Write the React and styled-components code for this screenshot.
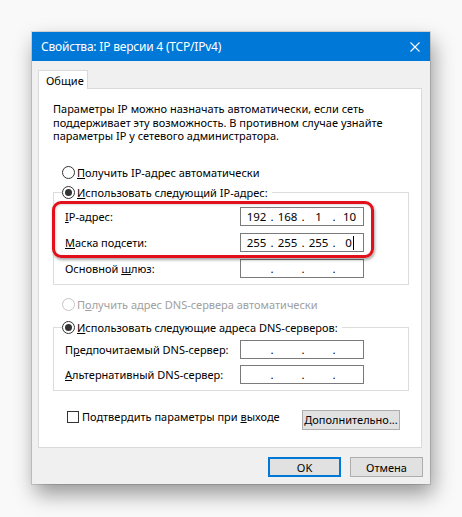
import styled, { createGlobalStyle } from "styled-components"

const Global = createGlobalStyle`
  *, *::before, *::after {
    box-sizing: border-box;
  }
  body {
    margin: 0;
    background: #f9f9f9;
    font-family: "Noto Sans", "Open Sans", sans-serif;
    font-size: 11px;
    color: #000;
  }
`

const ip = ["192", "168", "1", "10"]
const mask = ["255", "255", "255", "0"]

const App = () => (
  <Page>
    <Global />
    <Window>
      <TitleBar>
        <Title>Свойства: IP версии 4 (TCP/IPv4)</Title>
        <Close viewBox="0 0 10 10">
          <path d="M0.5 0.5L9.5 9.5M9.5 0.5L0.5 9.5" />
        </Close>
      </TitleBar>
      <Body>
        <Tabs>
          <Tab>Общие</Tab>
        </Tabs>
        <Panel>
          <Intro>
            Параметры IP можно назначать автоматически, если сеть
            <br />
            поддерживает эту возможность. В противном случае узнайте
            <br />
            параметры IP у сетевого администратора.
          </Intro>
          <Radio top={22}>
            <Dot />
            <span><u>П</u>олучить IP-адрес автоматически</span>
          </Radio>
          <Group top={4} pad={6} gap={7}>
            <Legend>
              <Radio as="span">
                <Dot checked />
                <span><u>И</u>спользовать следующий IP-адрес:</span>
              </Radio>
            </Legend>
            <Highlight>
              <Field label={<><u>I</u>P-адрес:</>} value={ip} />
              <Field label={<><u>М</u>аска подсети:</>} value={mask} caret />
            </Highlight>
            <Field label={<>Основной <u>ш</u>люз:</>} />
          </Group>
          <Radio top={12} disabled>
            <Dot disabled />
            <span>П<u>о</u>лучить адрес DNS-сервера автоматически</span>
          </Radio>
          <Group top={7} pad={4} gap={6}>
            <Legend>
              <Radio as="span">
                <Dot checked />
                <span><u>И</u>спользовать следующие адреса DNS-серверов:</span>
              </Radio>
            </Legend>
            <Field label={<>П<u>р</u>едпочитаемый DNS-сервер:</>} />
            <Field label={<><u>А</u>льтернативный DNS-сервер:</>} />
          </Group>
          <BottomRow>
            <Check>
              <Box />
              <span>Подтвердить параметры при <u>в</u>ыходе</span>
            </Check>
            <Button wide><u>Д</u>ополнительно...</Button>
          </BottomRow>
        </Panel>
        <Footer>
          <Button primary>OK</Button>
          <Button>Отмена</Button>
        </Footer>
      </Body>
    </Window>
  </Page>
)

const Field = ({ label, value, caret }) => (
  <Row>
    <Label>{label}</Label>
    <IpBox>
      {[0, 1, 2, 3].map((i) => (
        <Segment key={i}>
          <Octet>
            {value ? value[i] : ""}
            {caret && i === 3 ? <Caret /> : null}
          </Octet>
          {i < 3 ? <Sep>.</Sep> : null}
        </Segment>
      ))}
    </IpBox>
  </Row>
)

export default App

const Page = styled.div`
  padding: 32px 0 40px 32px;
`

const Window = styled.div`
  width: 398px;
  height: 452px;
  background: #f0f0f0;
  box-shadow: 0 0 0 1px rgba(0, 0, 0, 0.12), 3px 10px 20px rgba(0, 0, 0, 0.4);
  display: flex;
  flex-direction: column;
`

const TitleBar = styled.div`
  flex-shrink: 0;
  height: 29px;
  background: #0078d7;
  color: #fff;
  display: flex;
  align-items: center;
  justify-content: space-between;
  padding: 0 10px 0 9px;
`

const Title = styled.div`
  font-size: 12px;
  letter-spacing: -0.2px;
`

const Close = styled.svg`
  width: 10px;
  height: 10px;
  path {
    stroke: #fff;
    stroke-width: 1.1;
    fill: none;
  }
`

const Body = styled.div`
  flex: 1;
  padding: 9px 8px 0 6px;
  display: flex;
  flex-direction: column;
`

const Tabs = styled.div`
  display: flex;
`

const Tab = styled.div`
  height: 19px;
  width: 50px;
  padding: 0 0 0 7px;
  display: flex;
  align-items: center;
  background: #fff;
  border: 1px solid #d9d9d9;
  border-bottom: none;
  margin-bottom: -1px;
  position: relative;
  z-index: 1;
`

const Panel = styled.div`
  flex-shrink: 0;
  height: 360px;
  background: #fff;
  border: 1px solid #d9d9d9;
  padding: 13px 12px 0 14px;
`

const Intro = styled.p`
  margin: 0;
  line-height: 13.5px;
  white-space: nowrap;
`

const Radio = styled.label`
  display: flex;
  align-items: center;
  gap: 2px;
  height: 16px;
  margin-top: ${(p) => p.top || 0}px;
  padding-left: ${(p) => (p.as ? 0 : 9)}px;
  color: ${(p) => (p.disabled ? "#a0a0a0" : "#000")};
  white-space: nowrap;
`

const Dot = styled.span`
  width: 13px;
  height: 13px;
  border-radius: 50%;
  border: 1px solid ${(p) => (p.disabled ? "#c4c4c4" : "#333")};
  background: #fff;
  display: flex;
  align-items: center;
  justify-content: center;
  &::after {
    content: "";
    width: 7px;
    height: 7px;
    border-radius: 50%;
    background: #333;
    display: ${(p) => (p.checked ? "block" : "none")};
  }
`

const Group = styled.fieldset`
  margin: ${(p) => p.top || 0}px 0 0 0;
  padding: ${(p) => p.pad}px 44px 6px 11px;
  border: 1px solid #dcdcdc;
  display: flex;
  flex-direction: column;
  gap: ${(p) => p.gap}px;
`

const Legend = styled.legend`
  margin-left: -3px;
  padding: 0 4px 0 0;
`

const Highlight = styled.div`
  position: relative;
  display: flex;
  flex-direction: column;
  gap: 7px;
  &::after {
    content: "";
    position: absolute;
    top: -6px;
    bottom: -6px;
    left: -13px;
    right: -10px;
    border: 3px solid #e3101b;
    border-radius: 9px;
    box-shadow: 1px 2px 3px rgba(0, 0, 0, 0.35), inset 1px 1px 2px rgba(0, 0, 0, 0.15);
    pointer-events: none;
  }
`

const Row = styled.div`
  display: flex;
  align-items: center;
  justify-content: space-between;
  height: 19px;
`

const Label = styled.span`
  white-space: nowrap;
`

const IpBox = styled.div`
  width: 124px;
  height: 19px;
  border: 1px solid #7a7a7a;
  background: #fff;
  display: flex;
  align-items: center;
  padding-left: 2px;
  font-size: 11.5px;
`

const Segment = styled.div`
  display: flex;
  align-items: center;
`

const Octet = styled.span`
  width: 27px;
  text-align: center;
  position: relative;
`

const Sep = styled.span`
  width: 4px;
  text-align: center;
`

const Caret = styled.span`
  display: inline-block;
  width: 1px;
  height: 14px;
  background: #000;
  margin-left: 1px;
  vertical-align: -3px;
`

const BottomRow = styled.div`
  margin-top: 19px;
  padding: 0 10px 0 14px;
  display: flex;
  align-items: flex-start;
  justify-content: space-between;
`

const Check = styled.label`
  height: 14px;
  display: flex;
  align-items: center;
  gap: 3px;
  white-space: nowrap;
`

const Box = styled.span`
  width: 12px;
  height: 12px;
  border: 1px solid #333;
  background: #fff;
`

const Footer = styled.div`
  display: flex;
  justify-content: flex-end;
  gap: 9px;
  padding: 9px 0 0;
`

const Button = styled.button`
  font: inherit;
  color: #000;
  width: ${(p) => (p.wide ? 98 : 73)}px;
  height: 20px;
  padding: 0;
  background: #e1e1e1;
  border: ${(p) => (p.primary ? "2px solid #0078d7" : "1px solid #adadad")};
  margin-right: ${(p) => (p.primary ? 0 : -1)}px;
`
